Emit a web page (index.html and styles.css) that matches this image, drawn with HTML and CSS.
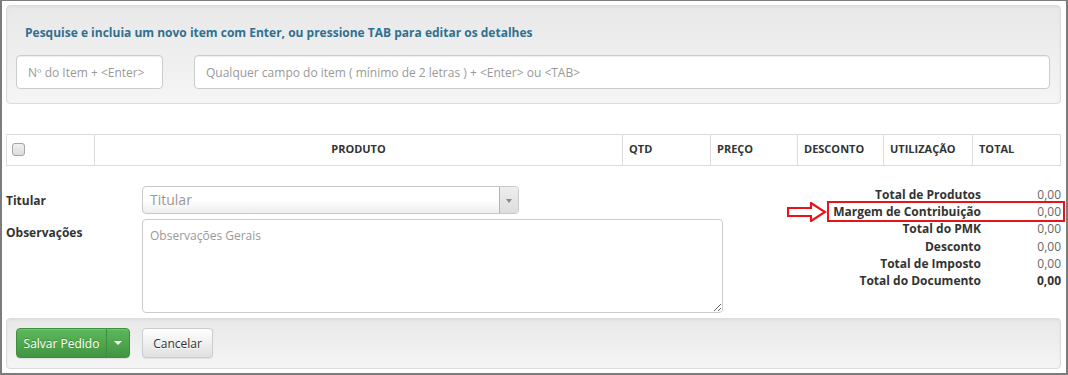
FILE: index.html
```html
<!DOCTYPE html>
<html lang="pt-BR">
<head>
    <meta charset="UTF-8">
    <title>Pedido</title>
    <link rel="stylesheet" href="styles.css">
</head>
<body>
<div class="frame">

    <!-- Busca de itens -->
    <div class="well search">
        <h4 class="search-title">Pesquise e incluia um novo item com Enter, ou pressione TAB para editar os detalhes</h4>
        <div class="search-row">
            <input type="text" class="field field-code" placeholder="Nº do Item + &lt;Enter&gt;">
            <input type="text" class="field field-any" placeholder="Qualquer campo do item ( mínimo de 2 letras ) + &lt;Enter&gt; ou &lt;TAB&gt;">
        </div>
    </div>

    <!-- Itens -->
    <table class="items">
        <colgroup>
            <col style="width:88px">
            <col style="width:528px">
            <col style="width:88px">
            <col style="width:87px">
            <col style="width:86px">
            <col style="width:89px">
            <col style="width:88px">
        </colgroup>
        <thead>
            <tr>
                <th><input type="checkbox" class="check"></th>
                <th class="center">PRODUTO</th>
                <th>QTD</th>
                <th>PREÇO</th>
                <th>DESCONTO</th>
                <th>UTILIZAÇÃO</th>
                <th>TOTAL</th>
            </tr>
        </thead>
    </table>

    <div class="details">
        <div class="details-form">
            <div class="form-row">
                <label class="form-label">Titular</label>
                <div class="select">
                    <span class="select-text">Titular</span>
                    <span class="select-arrow"><i></i></span>
                </div>
            </div>
            <div class="form-row form-row-top">
                <label class="form-label">Observações</label>
                <textarea class="notes" placeholder="Observações Gerais"></textarea>
            </div>
        </div>

        <div class="totals">
            <div class="total-row"><span class="total-label">Total de Produtos</span><span class="total-value">0,00</span></div>
            <div class="total-row"><span class="total-label">Margem de Contribuição</span><span class="total-value">0,00</span></div>
            <div class="total-row"><span class="total-label">Total do PMK</span><span class="total-value">0,00</span></div>
            <div class="total-row"><span class="total-label">Desconto</span><span class="total-value">0,00</span></div>
            <div class="total-row"><span class="total-label">Total de Imposto</span><span class="total-value">0,00</span></div>
            <div class="total-row total-final"><span class="total-label">Total do Documento</span><span class="total-value">0,00</span></div>

            <!-- destaque -->
            <div class="mark-box"></div>
            <svg class="mark-arrow" width="40" height="20" viewBox="0 0 40 20">
                <path d="M1 6 H24 V1 L38 10 L24 19 V14 H1 Z" fill="#fff" stroke="#e8141c" stroke-width="2.2" stroke-linejoin="miter"/>
            </svg>
        </div>
    </div>

    <!-- Ações -->
    <div class="well actions">
        <div class="btn-group">
            <button class="btn btn-success btn-main">Salvar Pedido</button>
            <button class="btn btn-success btn-caret"><span class="caret"></span></button>
        </div>
        <button class="btn btn-default">Cancelar</button>
    </div>
</div>
</body>
</html>
```

FILE: styles.css
```css
:root {
    --border-color: #ddd;
    --text-color: #333;
    --placeholder: #999;
    --radius: 4px;
}

* {
    box-sizing: border-box;
}

body {
    margin: 0;
    font-family: 'Open Sans', 'Liberation Sans', Arial, sans-serif;
    font-size: 12px;
    color: var(--text-color);
    background: #fff;
}

.frame {
    width: 1068px;
    height: 375px;
    border: 2px solid #7c7c7c;
    border-top-width: 1px;
    padding: 4px;
    overflow: hidden;
}

.well {
    background-image: linear-gradient(to bottom, #e8e8e8 0, #f5f5f5 100%);
    border: 1px solid #dcdcdc;
    border-radius: var(--radius);
    box-shadow: inset 0 1px 3px rgba(0,0,0,0.05), 0 1px 0 rgba(255,255,255,0.1);
}

.search {
    height: 99px;
    padding: 18px 10px 14px 9px;
    margin-right: 1px;
}

.search-title {
    margin: 0 0 14px 9px;
    font-size: 12px;
    line-height: 17px;
    font-weight: 700;
    color: #31708f;
}

.search-row {
    display: flex;
    gap: 31px;
}

.field {
    height: 34px;
    padding: 6px 11px;
    border: 1px solid #ccc;
    border-radius: var(--radius);
    box-shadow: inset 0 1px 1px rgba(0,0,0,0.075);
    font-family: inherit;
    font-size: 12px;
    color: #555;
    background: #fff;
}

.field::placeholder {
    color: var(--placeholder);
}

.field-code {
    width: 147px;
}

.field-any {
    flex: 1;
}

.items {
    width: 1054px;
    margin-top: 30px;
    border-collapse: collapse;
    table-layout: fixed;
}

.items th {
    height: 31px;
    padding: 0 6px 3px;
    border: 1px solid var(--border-color);
    font-size: 11px;
    font-weight: 700;
    text-align: left;
    line-height: 16px;
    color: var(--text-color);
}

.items th.center {
    text-align: center;
}

.check {
    appearance: none;
    -webkit-appearance: none;
    display: block;
    width: 13px;
    height: 13px;
    margin: 2px 0 0 -1px;
    border: 1px solid #a6a6a6;
    border-radius: 3px;
    background: linear-gradient(to bottom, #f0f0f0, #dcdcdc);
}

.details {
    display: flex;
    justify-content: space-between;
    margin-top: 20px;
}

.form-row {
    display: flex;
    align-items: center;
    margin-bottom: 5px;
}

.form-row:last-child {
    margin-bottom: 0;
}

.form-row-top {
    align-items: flex-start;
}

.form-label {
    width: 136px;
    font-weight: 700;
    font-size: 12px;
    line-height: 17px;
}

.form-row-top .form-label {
    padding-top: 5px;
}

.select {
    display: flex;
    width: 377px;
    height: 28px;
    border: 1px solid #c8c8c8;
    border-radius: var(--radius);
    background-image: linear-gradient(to bottom, #fff 0, #fff 50%, #eee 100%);
}

.select-text {
    flex: 1;
    padding-left: 7px;
    font-size: 14px;
    line-height: 26px;
    color: #999;
}

.select-arrow {
    width: 19px;
    border-left: 1px solid #b4b4b4;
    border-radius: 0 var(--radius) var(--radius) 0;
    background-image: linear-gradient(to bottom, #eee 0, #ddd 100%);
    position: relative;
}

.select-arrow i {
    position: absolute;
    left: 6px;
    top: 12px;
    border-left: 3px solid transparent;
    border-right: 3px solid transparent;
    border-top: 4px solid #888;
}

.notes {
    display: block;
    width: 581px;
    height: 94px;
    padding: 7px 7px;
    border: 1px solid #ccc;
    border-radius: var(--radius);
    font-family: inherit;
    font-size: 12px;
    line-height: 17px;
    resize: both;
}

.notes::placeholder {
    color: var(--placeholder);
}

.totals {
    position: relative;
    width: 260px;
    margin-right: 1px;
}

.total-row {
    display: flex;
    justify-content: flex-end;
    line-height: 17px;
    height: 17.2px;
}

.total-label {
    font-weight: 700;
    text-align: right;
}

.total-value {
    width: 80px;
    text-align: right;
    color: #666;
}

.total-final .total-value {
    font-weight: 700;
    color: var(--text-color);
}

.mark-box {
    position: absolute;
    left: 26px;
    top: 15px;
    width: 238px;
    height: 21px;
    border: 2px solid #e8141c;
}

.mark-arrow {
    position: absolute;
    left: -14px;
    top: 16px;
}

.actions {
    margin-top: 5px;
    margin-right: 1px;
    height: 51px;
    padding: 9px 9px;
    display: flex;
    gap: 12px;
}

.btn-group {
    display: flex;
}

.btn {
    height: 30px;
    padding: 0 10px;
    border-radius: var(--radius);
    font-family: inherit;
    font-size: 12px;
    white-space: nowrap;
    cursor: pointer;
}

.btn-success {
    color: #fff;
    border: 1px solid #3e8f3e;
    background-image: linear-gradient(to bottom, #5cb85c 0, #419641 100%);
    text-shadow: 0 -1px 0 rgba(0,0,0,0.2);
    box-shadow: inset 0 1px 0 rgba(255,255,255,0.15), 0 1px 1px rgba(0,0,0,0.075);
}

.btn-main {
    width: 91px;
    padding: 0;
    border-radius: var(--radius) 0 0 var(--radius);
}

.btn-caret {
    width: 24px;
    padding: 0;
    margin-left: -1px;
    border-radius: 0 var(--radius) var(--radius) 0;
    display: flex;
    align-items: center;
    justify-content: center;
}

.caret {
    display: block;
    border-left: 4px solid transparent;
    border-right: 4px solid transparent;
    border-top: 4px solid #fff;
}

.btn-default {
    width: 71px;
    color: var(--text-color);
    border: 1px solid #ccc;
    background-image: linear-gradient(to bottom, #fff 0, #e0e0e0 100%);
    text-shadow: 0 1px 0 #fff;
    box-shadow: inset 0 1px 0 rgba(255,255,255,0.15), 0 1px 1px rgba(0,0,0,0.075);
}
```
